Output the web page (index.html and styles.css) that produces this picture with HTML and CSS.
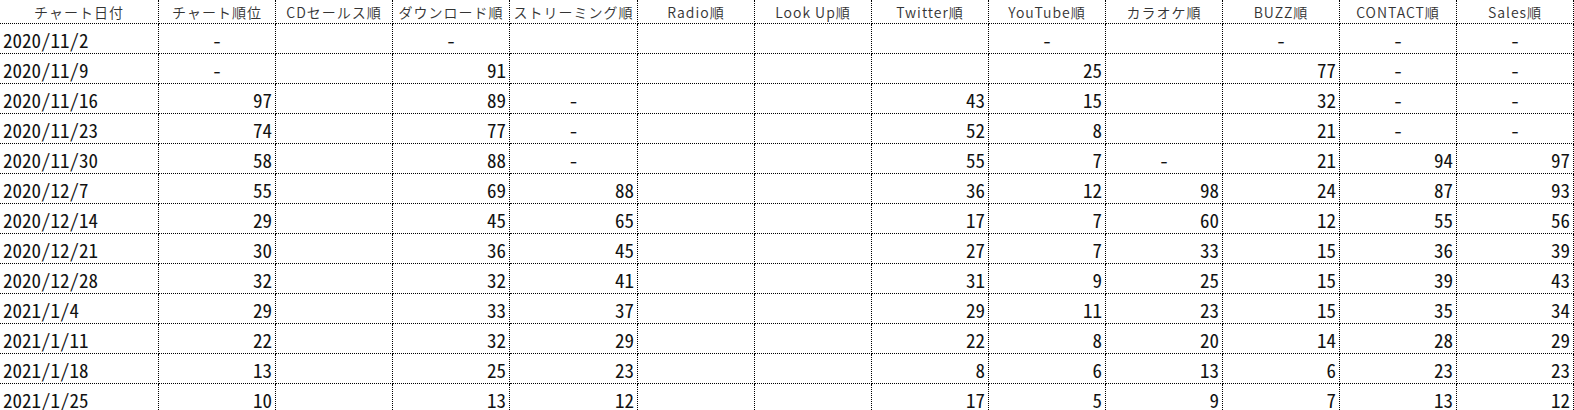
FILE: index.html
```html
<!DOCTYPE html>
<html lang="ja">
<head>
<meta charset="utf-8">
<title>チャート</title>
<link rel="stylesheet" href="styles.css">
</head>
<body>
<div class="sheet">
  <div class="hd">チャート日付</div><div class="hd">チャート順位</div><div class="hd">CDセールス順</div><div class="hd">ダウンロード順</div><div class="hd">ストリーミング順</div><div class="hd">Radio順</div><div class="hd">Look Up順</div><div class="hd">Twitter順</div><div class="hd">YouTube順</div><div class="hd">カラオケ順</div><div class="hd">BUZZ順</div><div class="hd">CONTACT順</div><div class="hd">Sales順</div>

  <div class="dt">2020/11/2</div><div class="ds">-</div><div class="c"></div><div class="ds">-</div><div class="c"></div><div class="c"></div><div class="c"></div><div class="c"></div><div class="ds">-</div><div class="c"></div><div class="ds">-</div><div class="ds">-</div><div class="ds">-</div>

  <div class="dt">2020/11/9</div><div class="ds">-</div><div class="c"></div><div class="n">91</div><div class="c"></div><div class="c"></div><div class="c"></div><div class="c"></div><div class="n">25</div><div class="c"></div><div class="n">77</div><div class="ds">-</div><div class="ds">-</div>

  <div class="dt">2020/11/16</div><div class="n">97</div><div class="c"></div><div class="n">89</div><div class="ds">-</div><div class="c"></div><div class="c"></div><div class="n">43</div><div class="n">15</div><div class="c"></div><div class="n">32</div><div class="ds">-</div><div class="ds">-</div>

  <div class="dt">2020/11/23</div><div class="n">74</div><div class="c"></div><div class="n">77</div><div class="ds">-</div><div class="c"></div><div class="c"></div><div class="n">52</div><div class="n">8</div><div class="c"></div><div class="n">21</div><div class="ds">-</div><div class="ds">-</div>

  <div class="dt">2020/11/30</div><div class="n">58</div><div class="c"></div><div class="n">88</div><div class="ds">-</div><div class="c"></div><div class="c"></div><div class="n">55</div><div class="n">7</div><div class="ds">-</div><div class="n">21</div><div class="n">94</div><div class="n">97</div>

  <div class="dt">2020/12/7</div><div class="n">55</div><div class="c"></div><div class="n">69</div><div class="n">88</div><div class="c"></div><div class="c"></div><div class="n">36</div><div class="n">12</div><div class="n">98</div><div class="n">24</div><div class="n">87</div><div class="n">93</div>

  <div class="dt">2020/12/14</div><div class="n">29</div><div class="c"></div><div class="n">45</div><div class="n">65</div><div class="c"></div><div class="c"></div><div class="n">17</div><div class="n">7</div><div class="n">60</div><div class="n">12</div><div class="n">55</div><div class="n">56</div>

  <div class="dt">2020/12/21</div><div class="n">30</div><div class="c"></div><div class="n">36</div><div class="n">45</div><div class="c"></div><div class="c"></div><div class="n">27</div><div class="n">7</div><div class="n">33</div><div class="n">15</div><div class="n">36</div><div class="n">39</div>

  <div class="dt">2020/12/28</div><div class="n">32</div><div class="c"></div><div class="n">32</div><div class="n">41</div><div class="c"></div><div class="c"></div><div class="n">31</div><div class="n">9</div><div class="n">25</div><div class="n">15</div><div class="n">39</div><div class="n">43</div>

  <div class="dt">2021/1/4</div><div class="n">29</div><div class="c"></div><div class="n">33</div><div class="n">37</div><div class="c"></div><div class="c"></div><div class="n">29</div><div class="n">11</div><div class="n">23</div><div class="n">15</div><div class="n">35</div><div class="n">34</div>

  <div class="dt">2021/1/11</div><div class="n">22</div><div class="c"></div><div class="n">32</div><div class="n">29</div><div class="c"></div><div class="c"></div><div class="n">22</div><div class="n">8</div><div class="n">20</div><div class="n">14</div><div class="n">28</div><div class="n">29</div>

  <div class="dt">2021/1/18</div><div class="n">13</div><div class="c"></div><div class="n">25</div><div class="n">23</div><div class="c"></div><div class="c"></div><div class="n">8</div><div class="n">6</div><div class="n">13</div><div class="n">6</div><div class="n">23</div><div class="n">23</div>

  <div class="dt">2021/1/25</div><div class="n">10</div><div class="c"></div><div class="n">13</div><div class="n">12</div><div class="c"></div><div class="c"></div><div class="n">17</div><div class="n">5</div><div class="n">9</div><div class="n">7</div><div class="n">13</div><div class="n">12</div>
</div>
</body>
</html>
```

FILE: styles.css
```css
html, body {
  margin: 0;
  padding: 0;
  background: #fff;
  overflow: hidden;
}

.sheet {
  display: grid;
  grid-template-columns: 159px 117px 117px 117px 128px repeat(8, 117px);
  grid-template-rows: 24px;
  grid-auto-rows: 30px;
  width: 1574px;
}

.sheet > div {
  box-sizing: border-box;
  border-right: 1px dotted #000;
  border-bottom: 1px dotted #000;
  display: flex;
  align-items: center;
  overflow: hidden;
  white-space: nowrap;
}

.hd {
  justify-content: center;
  font-family: "Noto Sans CJK JP", sans-serif;
  font-size: 14px;
  font-weight: 350;
  letter-spacing: 1px;
  color: #333;
}

.dt, .n, .ds, .c {
  font-family: "Noto Sans Mono CJK JP", "Noto Sans CJK JP", "DejaVu Sans Mono", monospace;
  font-feature-settings: "hwid" 1;
  font-size: 19px;
  font-weight: 350;
  color: #111;
  padding-top: 1px;
}

.dt {
  justify-content: flex-start;
  padding-left: 3px;
}

.n {
  justify-content: flex-end;
  padding-right: 3px;
}

.ds {
  justify-content: center;
}
```
